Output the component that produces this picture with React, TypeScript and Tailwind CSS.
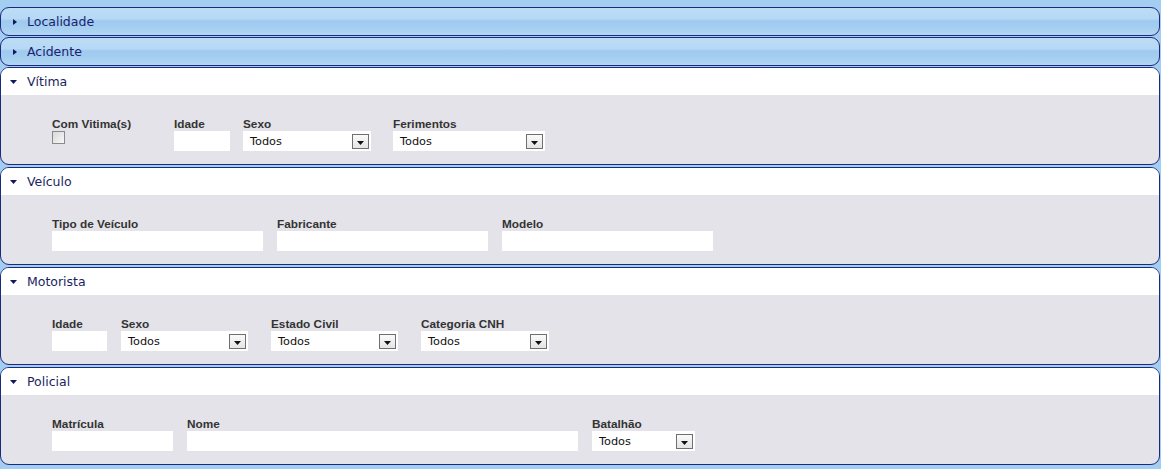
import React from "react";

const hdrFont = { fontFamily: '"DejaVu Sans", Verdana, sans-serif' };

function RightTri() {
  return (
    <svg width="6" height="8" viewBox="0 0 6 8" className="ml-[11px] mr-[9px]">
      <polygon points="1,1 5,4 1,7" fill="#101a5a" />
    </svg>
  );
}
function DownTri() {
  return (
    <svg width="9" height="6" viewBox="0 0 9 6" className="ml-[8px] mr-[9px]">
      <polygon points="1,1 8,1 4.5,5" fill="#101a5a" />
    </svg>
  );
}

function Collapsed({ title }: { title: string }) {
  return (
    <div className="h-[29px] mb-[1px] w-[1160px] rounded-[9px] border border-[#1a2a7e] bg-[linear-gradient(180deg,#bddcf6_0%,#b6d9f5_40%,#9fcaef_48%,#a4cdf0_70%,#b2d6f4_100%)] flex items-center">
      <RightTri />
      <span className="text-[12.5px] text-[#1a1f6e] pt-[1px]" style={hdrFont}>{title}</span>
    </div>
  );
}

function Expanded({ title, children }: { title: string; children: React.ReactNode }) {
  return (
    <div className="h-[98px] mb-[2px] w-[1160px] rounded-[9px] border border-[#1a2a7e] bg-[#e3e3e9] overflow-hidden flex flex-col">
      <div className="h-[27px] bg-white flex items-center shrink-0">
        <DownTri />
        <span className="text-[12.5px] text-[#1a1f5e] pt-[1px]" style={hdrFont}>{title}</span>
      </div>
      <div className="pt-[22px] pl-[51px] flex items-start">{children}</div>
    </div>
  );
}

const lblFont = { fontFamily: '"Liberation Sans", Arial, sans-serif' };

function Field({ label, ml, w, children }: { label: string; ml: number; w?: number; children: React.ReactNode }) {
  return (
    <div className="flex flex-col" style={{ marginLeft: ml, width: w }}>
      <div className="h-[14px] leading-[14px] text-[11.8px] font-bold text-[#333333] whitespace-nowrap" style={lblFont}>{label}</div>
      {children}
    </div>
  );
}

function Input({ w }: { w: number }) {
  return <div className="h-[20px] bg-white" style={{ width: w }} />;
}

function Select({ w }: { w: number }) {
  return (
    <div className="h-[20px] bg-white flex items-center justify-between" style={{ width: w }}>
      <span className="pl-[7px] pt-[2px] text-[11.3px] text-[#111]" style={hdrFont}>Todos</span>
      <div className="mr-[2px] mt-[1px] w-[17px] h-[15px] border border-[#6f6f6f] bg-[linear-gradient(180deg,#fafafa,#e4e4e4)] flex items-center justify-center">
        <svg width="7" height="4" viewBox="0 0 7 4" className="mt-[3px]">
          <polygon points="0,0 7,0 3.5,4" fill="#111" />
        </svg>
      </div>
    </div>
  );
}

export default function App() {
  return (
    <div className="w-[1161px] h-[469px] bg-[#a3cdf1] pt-[7px] overflow-hidden">
      <Collapsed title="Localidade" />
      <Collapsed title="Acidente" />
      <Expanded title="Vítima">
        <Field label="Com Vitima(s)" ml={0} w={122}>
          <div className="w-[13px] h-[13px] border border-[#8a8a8a] bg-[linear-gradient(135deg,#d8d8d8,#f8f8f8)]" />
        </Field>
        <Field label="Idade" ml={0}>
          <Input w={56} />
        </Field>
        <Field label="Sexo" ml={13}>
          <Select w={128} />
        </Field>
        <Field label="Ferimentos" ml={22}>
          <Select w={152} />
        </Field>
      </Expanded>
      <Expanded title="Veículo">
        <Field label="Tipo de Veículo" ml={0}>
          <Input w={211} />
        </Field>
        <Field label="Fabricante" ml={14}>
          <Input w={211} />
        </Field>
        <Field label="Modelo" ml={14}>
          <Input w={211} />
        </Field>
      </Expanded>
      <Expanded title="Motorista">
        <Field label="Idade" ml={0}>
          <Input w={55} />
        </Field>
        <Field label="Sexo" ml={14}>
          <Select w={127} />
        </Field>
        <Field label="Estado Civil" ml={23}>
          <Select w={127} />
        </Field>
        <Field label="Categoria CNH" ml={23}>
          <Select w={128} />
        </Field>
      </Expanded>
      <Expanded title="Policial">
        <Field label="Matrícula" ml={0}>
          <Input w={121} />
        </Field>
        <Field label="Nome" ml={14}>
          <Input w={391} />
        </Field>
        <Field label="Batalhão" ml={14}>
          <Select w={103} />
        </Field>
      </Expanded>
    </div>
  );
}
